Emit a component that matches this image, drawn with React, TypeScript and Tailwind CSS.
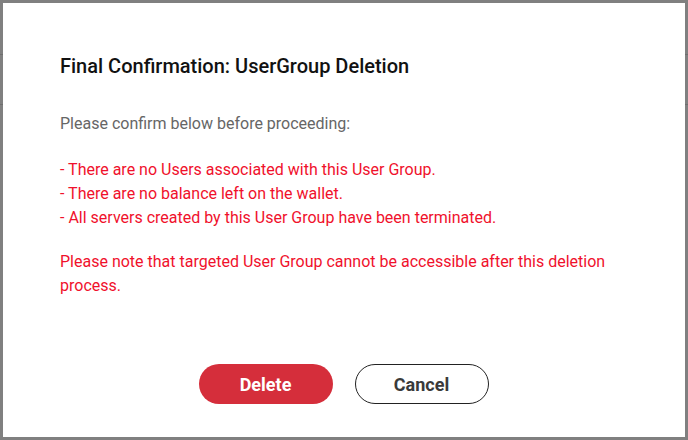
import React from "react";

export default function App() {
  return (
    <div className="relative w-[688px] h-[440px] bg-[#808080] overflow-hidden" style={{ fontFamily: "Roboto, 'Liberation Sans', sans-serif" }}>
      <div className="absolute left-0 right-0 top-[54px] h-px bg-[#6f6f6f]" />
      <div className="absolute left-0 right-0 top-[104px] h-px bg-[#6f6f6f]" />
      <div className="absolute left-[3px] top-[3px] w-[682px] h-[434px] bg-white flex flex-col pt-[49px] pb-[33px] pl-[57px] pr-[57px]">
        <h1 className="text-[20px] leading-[28px] font-medium text-[#111111]">
          Final Confirmation: UserGroup Deletion
        </h1>
        <p className="mt-[32px] text-[16px] leading-[24px] text-[#666666]">
          Please confirm below before proceeding:
        </p>
        <div className="mt-[22px] text-[16px] leading-[24px] text-[#f0112c]">
          <p>- There are no Users associated with this User Group.</p>
          <p>- There are no balance left on the wallet.</p>
          <p>- All servers created by this User Group have been terminated.</p>
        </div>
        <p className="mt-[20px] text-[16px] leading-[24px] text-[#f0112c]">
          Please note that targeted User Group cannot be accessible after this deletion process.
        </p>
        <div className="flex-1" />
        <div className="flex justify-center gap-[22px] pr-[1px]">
          <button className="w-[134px] h-[40px] rounded-full bg-[#d52e3b] text-white text-[18px] font-bold">
            Delete
          </button>
          <button className="w-[134px] h-[40px] rounded-full border border-[#222222] bg-white text-[#3a3a3a] text-[18px] font-bold">
            Cancel
          </button>
        </div>
      </div>
    </div>
  );
}
